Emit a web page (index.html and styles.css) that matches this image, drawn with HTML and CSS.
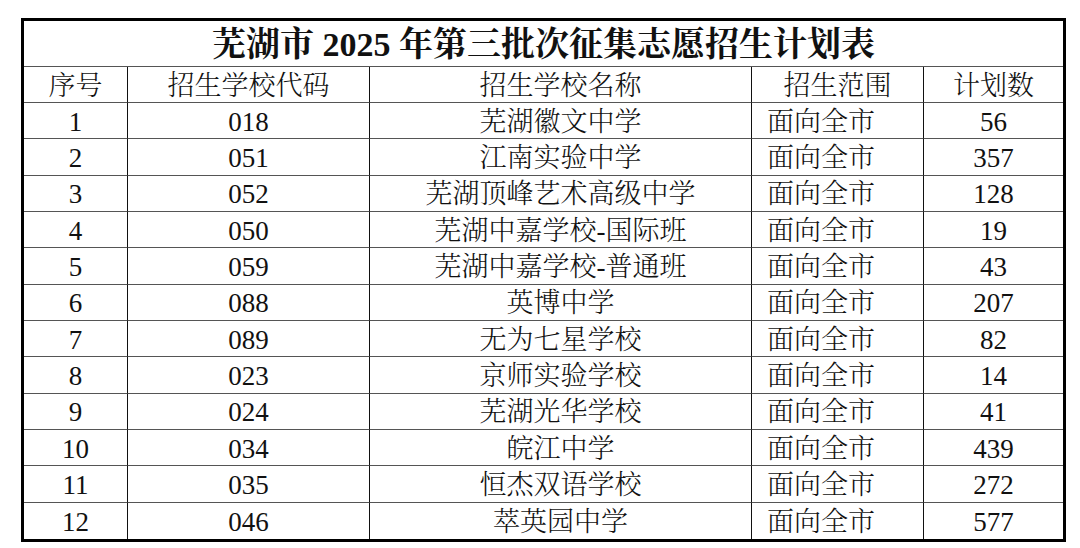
FILE: index.html
```html
<!DOCTYPE html>
<html lang="zh-CN">
<head>
<meta charset="utf-8">
<title>芜湖市 2025 年第三批次征集志愿招生计划表</title>
<link rel="stylesheet" href="styles.css">
</head>
<body>
<div class="sheet">
  <div class="grid">
    <div class="cell title">芜湖市 2025 年第三批次征集志愿招生计划表</div>
    <div class="cell">序号</div><div class="cell">招生学校代码</div><div class="cell">招生学校名称</div><div class="cell">招生范围</div><div class="cell last">计划数</div>
    <div class="cell">1</div><div class="cell">018</div><div class="cell">芜湖徽文中学</div><div class="cell scope">面向全市</div><div class="cell last">56</div>
    <div class="cell">2</div><div class="cell">051</div><div class="cell">江南实验中学</div><div class="cell scope">面向全市</div><div class="cell last">357</div>
    <div class="cell">3</div><div class="cell">052</div><div class="cell">芜湖顶峰艺术高级中学</div><div class="cell scope">面向全市</div><div class="cell last">128</div>
    <div class="cell">4</div><div class="cell">050</div><div class="cell">芜湖中嘉学校-国际班</div><div class="cell scope">面向全市</div><div class="cell last">19</div>
    <div class="cell">5</div><div class="cell">059</div><div class="cell">芜湖中嘉学校-普通班</div><div class="cell scope">面向全市</div><div class="cell last">43</div>
    <div class="cell">6</div><div class="cell">088</div><div class="cell">英博中学</div><div class="cell scope">面向全市</div><div class="cell last">207</div>
    <div class="cell">7</div><div class="cell">089</div><div class="cell">无为七星学校</div><div class="cell scope">面向全市</div><div class="cell last">82</div>
    <div class="cell">8</div><div class="cell">023</div><div class="cell">京师实验学校</div><div class="cell scope">面向全市</div><div class="cell last">14</div>
    <div class="cell">9</div><div class="cell">024</div><div class="cell">芜湖光华学校</div><div class="cell scope">面向全市</div><div class="cell last">41</div>
    <div class="cell">10</div><div class="cell">034</div><div class="cell">皖江中学</div><div class="cell scope">面向全市</div><div class="cell last">439</div>
    <div class="cell">11</div><div class="cell">035</div><div class="cell">恒杰双语学校</div><div class="cell scope">面向全市</div><div class="cell last">272</div>
    <div class="cell bottom">12</div><div class="cell bottom">046</div><div class="cell bottom">萃英园中学</div><div class="cell scope bottom">面向全市</div><div class="cell last bottom">577</div>
  </div>
</div>
</body>
</html>
```
FILE: styles.css
```css
html, body {
  margin: 0;
  padding: 0;
  background: #ffffff;
}
body {
  width: 1080px;
  height: 548px;
  overflow: hidden;
  font-family: "Liberation Serif", "Noto Serif CJK SC", "Noto Sans CJK SC", serif;
  color: #111111;
}
.sheet {
  box-sizing: border-box;
  width: 1045px;
  height: 524px;
  margin: 18px 0 0 21px;
  border: 3px solid #000000;
}
.grid {
  display: grid;
  grid-template-columns: 104px 242px 382px 172px 139px;
  grid-template-rows: 46px 36px repeat(12, 1fr);
  height: 100%;
}
.cell {
  box-sizing: border-box;
  display: flex;
  align-items: center;
  justify-content: center;
  padding-top: 3px;
  font-size: 27px;
  font-weight: 300;
  line-height: 1;
  white-space: nowrap;
  border-right: 1px solid #111111;
  border-bottom: 1px solid #555555;
}
.cell.last {
  border-right: none;
}
.cell.bottom {
  border-bottom: none;
}
.cell.scope {
  justify-content: flex-start;
  padding-left: 15px;
}
.cell.title {
  grid-column: 1 / -1;
  border-right: none;
  padding-top: 2px;
  font-size: 34px;
  font-weight: bold;
}
```
